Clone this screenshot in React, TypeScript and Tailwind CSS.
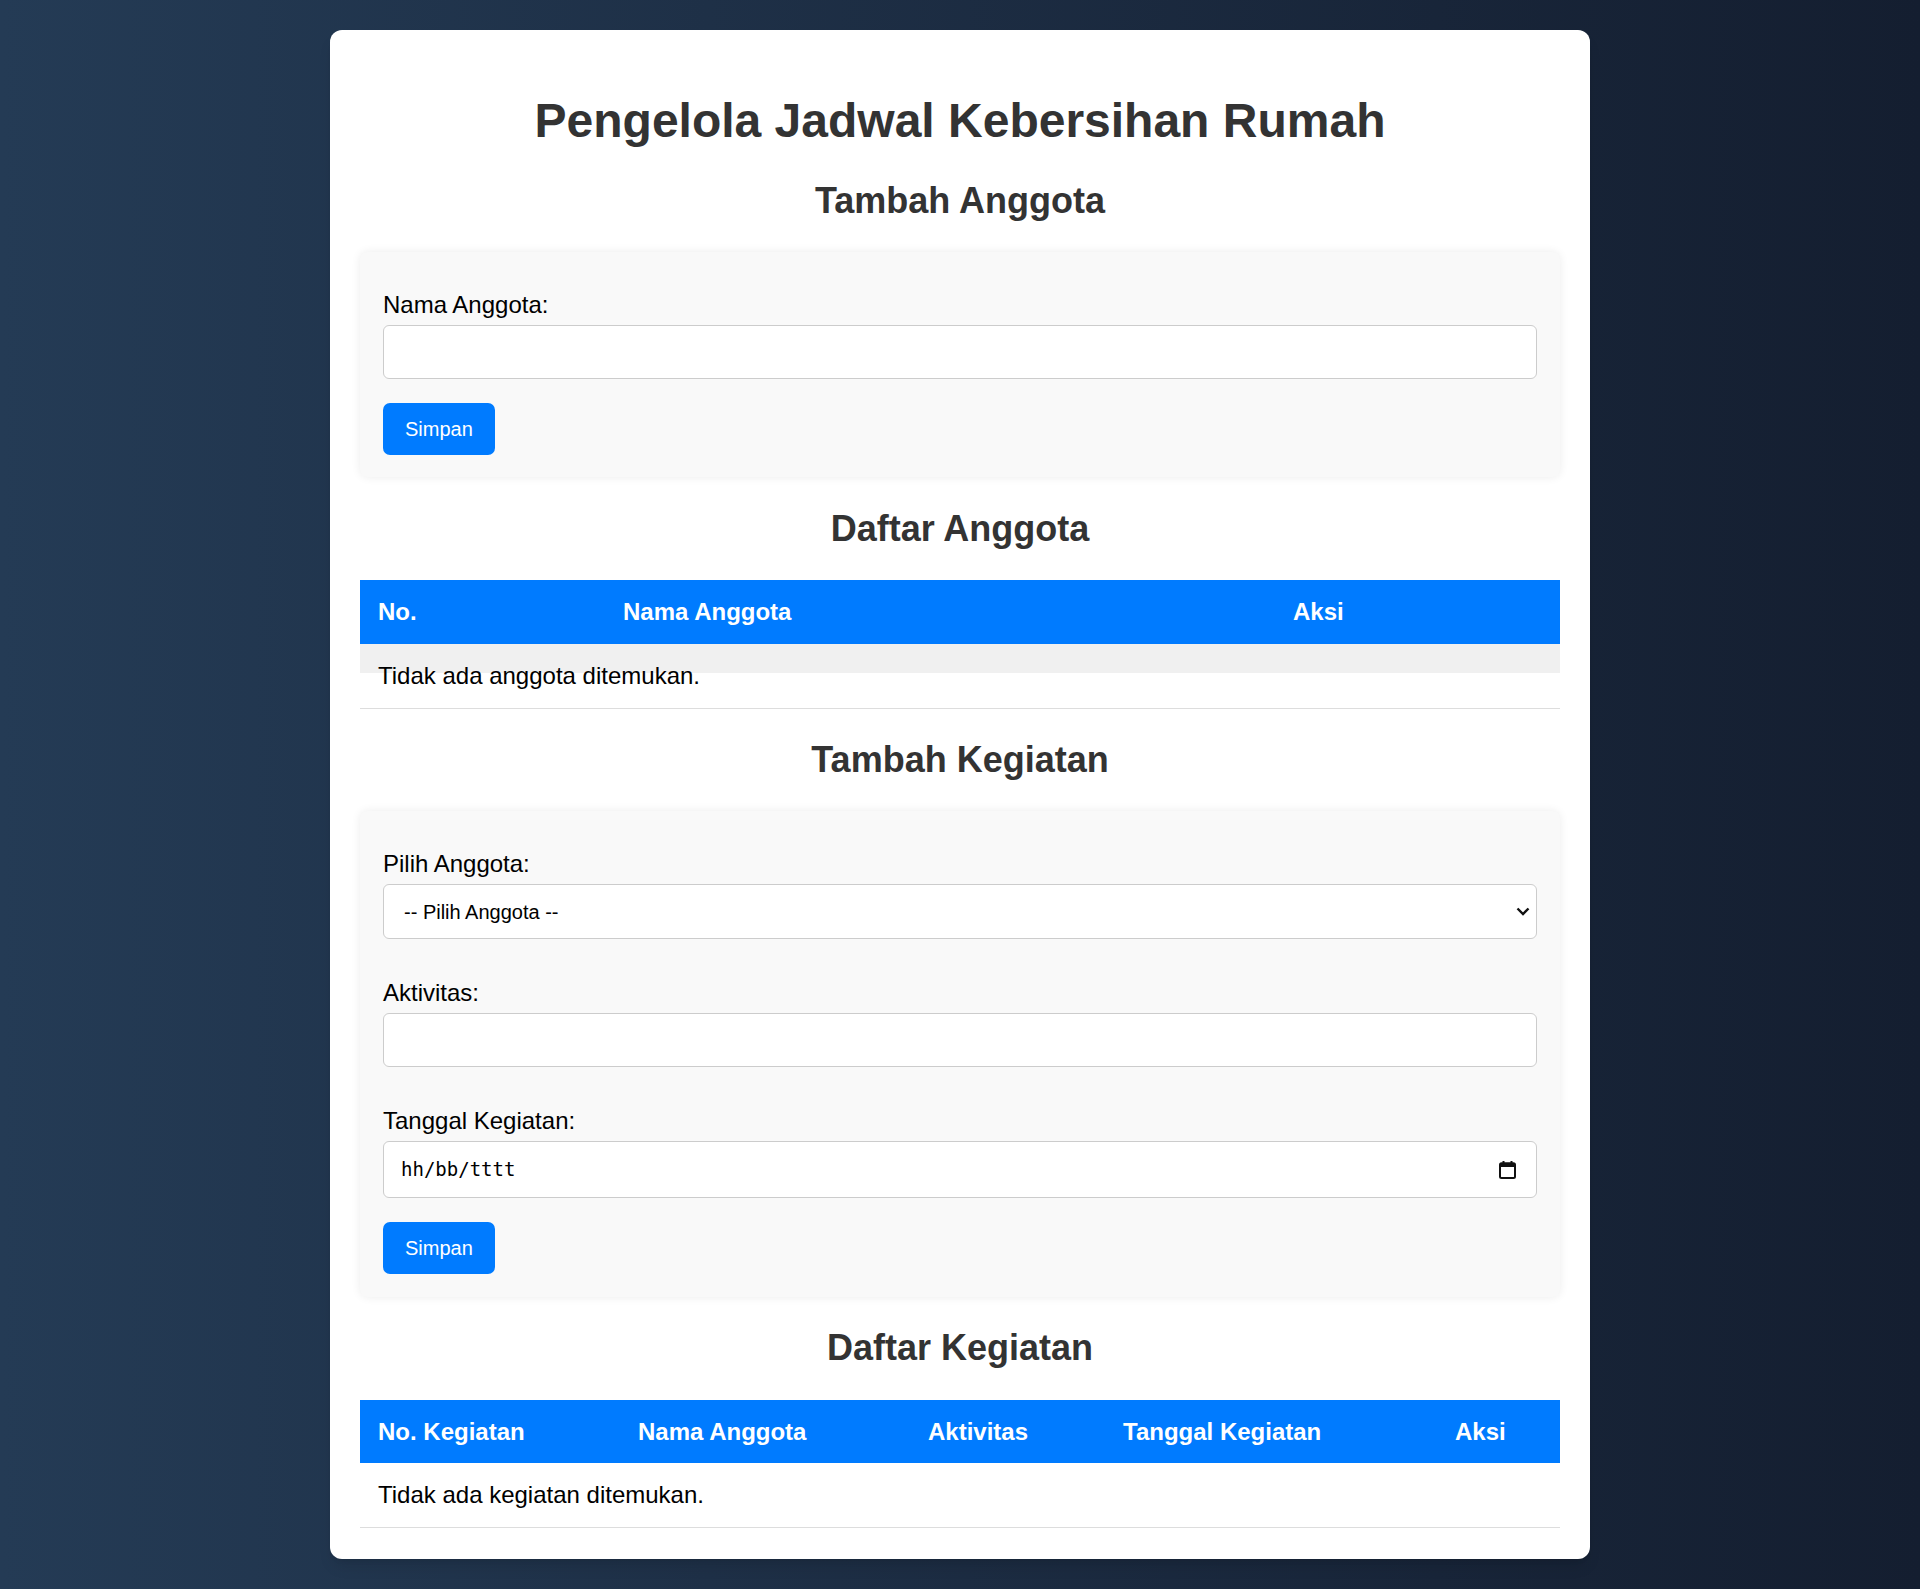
import React from 'react';

const font = { fontFamily: '"Liberation Sans", Arial, sans-serif' };

const Label: React.FC<{ children: React.ReactNode }> = ({ children }) => (
    <label className="block mt-[16px] mb-[6px] text-[24px] leading-[28px] text-black">{children}</label>
);

const SaveButton: React.FC = () => (
    <button className="h-[52px] px-[22px] rounded-[7px] bg-[#007bff] text-white text-[20px] leading-[23px]">
        Simpan
    </button>
);

const SectionTitle: React.FC<{ children: React.ReactNode }> = ({ children }) => (
    <h2 className="text-center text-[36px] leading-[41px] font-bold text-[#333]">{children}</h2>
);

export default function App() {
    return (
        <div style={font} className="min-h-screen bg-gradient-to-r from-[#243b55] to-[#141e30] py-[30px]">
            <div className="mx-auto w-[1260px] bg-white rounded-[12px] px-[30px] pt-[30px] pb-[31px] shadow-lg flex flex-col">
                <h1 className="mt-[33px] text-center text-[48px] leading-[55px] font-bold text-[#333]">
                    Pengelola Jadwal Kebersihan Rumah
                </h1>

                <div className="mt-[32px]">
                    <SectionTitle>Tambah Anggota</SectionTitle>
                </div>

                {/* Form anggota */}
                <div className="mt-[31px] flex flex-col bg-[#f9f9f9] rounded-[8px] shadow-[0_0_10px_rgba(0,0,0,0.08)] px-[23px] pt-[23px] pb-[22px]">
                    <div className="flex flex-col">
                        <Label>Nama Anggota:</Label>
                        <input
                            type="text"
                            className="block w-full h-[54px] rounded-[6px] border border-[#ccc] bg-white px-[15px] text-[20px] outline-none"
                        />
                    </div>
                    <div className="mt-[24px]">
                        <SaveButton />
                    </div>
                </div>

                <div className="mt-[31px]">
                    <SectionTitle>Daftar Anggota</SectionTitle>
                </div>

                <div className="mt-[31px] text-[24px] leading-[28px]">
                    <div className="grid grid-cols-[245px_670px_285px] bg-[#007bff] text-white font-bold">
                        <div className="p-[18px]">No.</div>
                        <div className="p-[18px]">Nama Anggota</div>
                        <div className="p-[18px]">Aksi</div>
                    </div>
                    <div className="bg-[linear-gradient(to_bottom,#f0f0f0_29px,transparent_29px)] border-b border-[#ddd] p-[18px] text-black">
                        Tidak ada anggota ditemukan.
                    </div>
                </div>

                <div className="mt-[30px]">
                    <SectionTitle>Tambah Kegiatan</SectionTitle>
                </div>

                {/* Form kegiatan */}
                <div className="mt-[31px] flex flex-col bg-[#f9f9f9] rounded-[8px] shadow-[0_0_10px_rgba(0,0,0,0.08)] px-[23px] pt-[23px] pb-[23px]">
                    <div className="flex flex-col">
                        <Label>Pilih Anggota:</Label>
                        <div className="flex items-center justify-between h-[55px] rounded-[6px] border border-[#ccc] bg-white pl-[20px] pr-[6px] text-[20px] text-black">
                            <span>-- Pilih Anggota --</span>
                            <svg width="14" height="9" viewBox="0 0 14 9" fill="none" stroke="#111" strokeWidth="2.4">
                                <path d="M1.5 1.5 L7 7 L12.5 1.5" />
                            </svg>
                        </div>
                    </div>
                    <div className="mt-[24px] flex flex-col">
                        <Label>Aktivitas:</Label>
                        <input
                            type="text"
                            className="block w-full h-[54px] rounded-[6px] border border-[#ccc] bg-white px-[15px] text-[20px] outline-none"
                        />
                    </div>
                    <div className="mt-[24px] flex flex-col">
                        <Label>Tanggal Kegiatan:</Label>
                        <div className="flex items-center justify-between h-[57px] rounded-[6px] border border-[#ccc] bg-white pl-[17px] pr-[20px]">
                            <span
                                className="text-[19px] text-black"
                                style={{ fontFamily: '"DejaVu Sans Mono", "Liberation Mono", monospace' }}
                            >
                                hh/bb/tttt
                            </span>
                            <svg width="17" height="18" viewBox="0 0 17 18" fill="none">
                                <rect x="1" y="2.2" width="15" height="14.8" rx="1.5" stroke="#111" strokeWidth="2" />
                                <rect x="1" y="2" width="15" height="4" fill="#111" />
                                <rect x="3.5" y="0" width="2" height="3" fill="#111" />
                                <rect x="11.5" y="0" width="2" height="3" fill="#111" />
                            </svg>
                        </div>
                    </div>
                    <div className="mt-[24px]">
                        <SaveButton />
                    </div>
                </div>

                <div className="mt-[30px]">
                    <SectionTitle>Daftar Kegiatan</SectionTitle>
                </div>

                <div className="mt-[32px] text-[24px] leading-[27px]">
                    <div className="grid grid-cols-[260px_290px_195px_332px_123px] bg-[#007bff] text-white font-bold">
                        <div className="p-[18px]">No. Kegiatan</div>
                        <div className="p-[18px]">Nama Anggota</div>
                        <div className="p-[18px]">Aktivitas</div>
                        <div className="p-[18px]">Tanggal Kegiatan</div>
                        <div className="p-[18px]">Aksi</div>
                    </div>
                    <div className="border-b border-[#ddd] p-[18px] leading-[28px] text-black">
                        Tidak ada kegiatan ditemukan.
                    </div>
                </div>
            </div>
        </div>
    );
}
